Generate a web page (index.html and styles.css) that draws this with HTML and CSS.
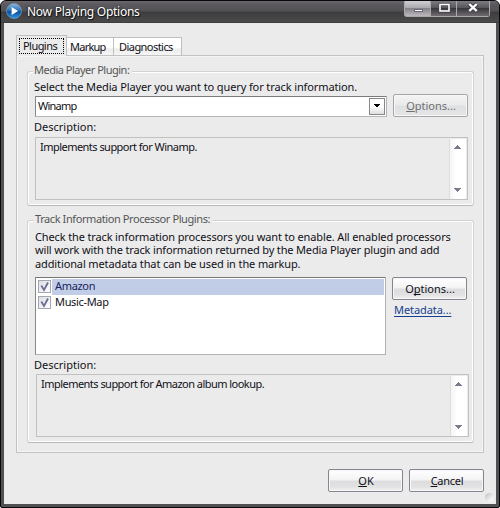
FILE: index.html
```html
<!DOCTYPE html>
<html lang="en">
<head>
<meta charset="utf-8">
<title>Now Playing Options</title>
<link rel="stylesheet" href="styles.css">
</head>
<body>
<div class="window">
  <header class="titlebar">
    <svg class="app-icon" width="16" height="16" viewBox="0 0 17 17">
      <defs><linearGradient id="orb" x1="0" y1="0" x2="0" y2="1"><stop offset="0" stop-color="#8fb8dc"/><stop offset=".45" stop-color="#2f75b8"/><stop offset=".55" stop-color="#0a4f9e"/><stop offset="1" stop-color="#2c9be4"/></linearGradient></defs>
      <circle cx="8.5" cy="8.5" r="8" fill="url(#orb)" stroke="#7f9dbd" stroke-width=".7"/>
      <path d="M6 4.3L12.8 8.5L6 12.7Z" fill="#fff"/>
    </svg>
    <h1 class="title"><span class="t-title">Now Playing Options</span></h1>
    <div class="controls">
      <span class="ctl ctl-min"><svg width="25" height="14"><rect x="9.5" y="8.5" width="8" height="2" fill="#fff" stroke="#666678"/></svg></span>
      <span class="ctl ctl-max"><svg width="25" height="14"><rect x="9" y="3.5" width="9" height="7" fill="none" stroke="#44444c" stroke-width="3"/><rect x="9" y="3.5" width="9" height="6.5" fill="none" stroke="#fff" stroke-width="1.6"/></svg></span>
      <span class="ctl ctl-close"><svg width="32" height="14"><path d="M12 3L20 10M20 3L12 10" stroke="#44444c" stroke-width="4.4"/><path d="M12.3 3L19.7 10M19.7 3L12.3 10" stroke="#fff" stroke-width="2.4"/></svg></span>
    </div>
  </header>
  <main class="client">
    <nav class="tabs">
      <div class="tab tab-active"><span class="focus"><span class="t-plugins">Plugins</span></span></div>
      <div class="tab tab-markup"><span class="t-markup">Markup</span></div>
      <div class="tab tab-diag"><span class="t-diag">Diagnostics</span></div>
    </nav>
    <div class="panel">
      <section class="group group-player">
        <h2 class="legend"><span class="t-leg1">Media Player Plugin:</span></h2>
        <p class="line"><span class="t-select">Select the Media Player you want to query for track information.</span></p>
        <div class="row">
          <div class="combo"><span class="t-winamp">Winamp</span>
            <span class="drop"><svg width="14" height="15"><path d="M4 5H10V6H9V7H8V8H6V7H5V6H4Z" fill="#000"/></svg></span>
          </div>
          <div class="button disabled"><span class="t-opt"><u>O</u>ptions...</span></div>
        </div>
        <p class="line desc-label"><span class="t-desc">Description:</span></p>
        <div class="memo"><span class="t-imp1">Implements support for Winamp.</span>
          <div class="scroll"><svg width="16" height="60"><path d="M7 6H8V7H9V8H10V9H11V10H4V9H5V8H6V7H7ZM4 49H11V50H10V51H9V52H8V53H7V52H6V51H5V50H4Z" fill="#797c8c"/></svg></div>
        </div>
      </section>
      <section class="group group-track">
        <h2 class="legend legend-track"><span class="t-leg2">Track Information Processor Plugins:</span></h2>
        <p class="para"><span class="t-p1">Check the track information processors you want to enable. All enabled processors</span><span class="t-p2">will work with the track information returned by the Media Player plugin and add</span><span class="t-p3">additional metadata that can be used in the markup.</span></p>
        <div class="row row-list">
          <div class="list">
            <div class="item"><span class="check"><svg width="11" height="11"><path d="M2.3 4.5L5 9L9 1.5" fill="none" stroke="#696c99" stroke-width="1.8"/></svg></span><div class="name selected"><span class="t-amazon">Amazon</span></div></div>
            <div class="item"><span class="check"><svg width="11" height="11"><path d="M2.3 4.5L5 9L9 1.5" fill="none" stroke="#696c99" stroke-width="1.8"/></svg></span><div class="name"><span class="t-music">Music-Map</span></div></div>
          </div>
          <div class="side">
            <div class="button"><span class="t-opt">O<u>p</u>tions...</span></div>
            <a class="link"><span class="t-meta">Metadata...</span></a>
          </div>
        </div>
        <p class="line desc-label2"><span class="t-desc">Description:</span></p>
        <div class="memo memo-track"><span class="t-imp2">Implements support for Amazon album lookup.</span>
          <div class="scroll"><svg width="16" height="60"><path d="M7 6H8V7H9V8H10V9H11V10H4V9H5V8H6V7H7ZM4 49H11V50H10V51H9V52H8V53H7V52H6V51H5V50H4Z" fill="#797c8c"/></svg></div>
        </div>
      </section>
    </div>
    <footer class="actions">
      <div class="button"><span class="t-ok"><u>O</u>K</span></div>
      <div class="button"><span class="t-cancel"><u>C</u>ancel</span></div>
    </footer>
    <span class="grip"></span>
  </main>
</div>
</body>
</html>
```

FILE: styles.css
```css
* { box-sizing: border-box; }
body { margin: 0; width: 500px; height: 508px; overflow: hidden; background: #fff; font: 11px/14px "Noto Sans", "Open Sans", sans-serif; color: #101018; }
h1, h2, p { margin: 0; font: inherit; }
svg { display: block; }
span { white-space: nowrap; }
u { text-decoration: underline; text-underline-offset: 1px; text-decoration-thickness: 1px; text-decoration-skip-ink: none; }

.window { width: 500px; height: 508px; border: 1px solid #08080a; border-radius: 6px 6px 2px 2px; background: #505052; padding: 0 3px 3px; overflow: hidden; }
.titlebar { height: 22px; margin: 0 -3px; padding: 1px 9px 0 5px; display: flex; background: linear-gradient(#6c686e 0, #5c5a5e 3px, #525154 10px, #3d3d3f 11px, #4a4a4b 21px, #333 22px); }
.app-icon { margin-top: 1px; flex: none; }
.title { margin: 1px auto 0 5px; font-size: 12px; line-height: 17px; color: #fff; text-shadow: 1px 1px 1px #111, -1px 0 1px #222; }
.controls { display: flex; height: 16px; margin-top: -1px; border: 1px solid #a9a9ae; border-top: 0; border-radius: 0 0 3px 3px; width: 86px; }
.ctl { height: 15px; border-right: 1px solid #a9a9ae; background: linear-gradient(#7c7c80, #58585c 45%, #38383b 50%, #706b70); }
.ctl-min { width: 26px; background: linear-gradient(#d0d0d4, #aaa9ae 45%, #858489 50%, #bcb8bd); }
.ctl-max { width: 26px; }
.ctl-close { width: 32px; border-right: 0; }

.client { height: 481px; background: #ebebeb; padding: 12px 12px 0; position: relative; }
.tabs { height: 20px; display: flex; align-items: flex-end; }
.tab { height: 18px; border: 1px solid #bfbfbf; border-left: 0; border-bottom: 0; background: linear-gradient(#fff 0, #fff 55%, #ececec 65%, #f6f6f6); padding-top: 2px; }
.tab-active { width: 51px; height: 21px; margin-bottom: -1px; border-left: 1px solid #bfbfbf; background: #ebebeb; padding: 2px 2px 0; position: relative; }
.focus { display: block; width: 45px; height: 16px; border: 1px dotted #000; padding: 0 0 0 3px; line-height: 13px; }
.tab-markup { width: 47px; padding-left: 3px; }
.tab-diag { width: 68px; padding-left: 5px; }
.panel { width: 468px; height: 398px; border: 1px solid #c3c3c3; box-shadow: inset 1px 1px #f5f5f5, inset -1px -1px #f5f5f5; padding: 15px 10px 0; }
.group { width: 447px; border: 1px solid #d2d2d2; border-radius: 3px; box-shadow: inset 1px 1px #fff, inset -1px -1px #fff; padding: 0 5px 0 7px; }
.group-player { height: 135px; border-bottom-color: #b9b9b9; }
.group-track { height: 223px; margin-top: 14px; border-bottom-color: #b9b9b9; }
.legend { width: max-content; height: 14px; margin: -9px 0 0 -2px; padding: 0 3px 0 1px; background: #ebebeb; color: #555; }
.legend-track { margin-left: -1px; }
.line { height: 14px; }
.group-player > .line:nth-of-type(1) { margin-top: 3px; text-indent: -1px; }
.row { display: flex; }
.combo { width: 352px; height: 21px; margin-top: 2px; border: 1px solid; border-color: #7c7c80 #b4b4b8 #b4b4b8 #85858a; border-radius: 1px; background: #fff; display: flex; justify-content: space-between; padding: 2px 1px 1px 2px; }
.drop { width: 16px; height: 17px; margin-top: -1px; border: 1px solid #888; background: linear-gradient(#fff 50%, #dedede); }
.button { width: 75px; height: 23px; border: 1px solid #858691; border-radius: 2px; box-shadow: inset 0 0 0 1px #f7f7f7; background: linear-gradient(#fff 0, #f4f4f5 45%, #dddde0 55%, #e2e2e2 80%, #f2f2f2); text-align: center; padding: 4px 0 0 1px; line-height: 14px; }
.row .button { margin-left: 6px; }
.disabled { color: #707070; border-color: #a5a6ac; background: linear-gradient(#f4f4f4, #ebebed 45%, #dfe0e2 55%, #e5e5e5); }
.desc-label { margin-top: 3px; text-indent: -1px; }
.memo { width: 433px; height: 63px; margin-top: 3px; border: 1px solid #c1c1c1; padding: 2px 1px 1px 4px; display: flex; justify-content: space-between; }
.scroll { width: 17px; height: 60px; margin-top: -1px; border-left: 1px solid #ddd; background: linear-gradient(90deg, #f5f5f5, #fff 40%); }
.para { margin-top: 4px; height: 40px; }
.para span { display: block; width: max-content; height: 13px; line-height: 13px; }
.para .t-p3 { margin-top: 1px; }
.row-list { margin-top: 7px; }
.list { width: 351px; height: 78px; border: 1px solid #b2b2b5; border-top-color: #777; border-left-color: #888; background: #fff; padding: 1px; }
.item { height: 16px; display: flex; }
.check { width: 13px; height: 13px; margin: 1px 1px 0 1px; border: 1px solid #a5a6b4; background: linear-gradient(135deg, #dedede, #fff); flex: none; }
.name { flex: 1; padding: 0 0 0 3px; height: 16px; }
.selected { background: #c1cde6; color: #18225f; }
.side { width: 82px; }
.link { display: block; margin: 3px 0 0 8px; color: #153f91; text-decoration: underline; text-underline-offset: 2px; text-decoration-skip-ink: none; }
.desc-label2 { margin-top: 3px; text-indent: -1px; }
.memo-track { margin: 2px 0 0 1px; }
.actions { display: flex; justify-content: flex-end; gap: 6px; margin-top: 16px; }
.grip { position: absolute; right: 2px; bottom: 2px; width: 9px; height: 9px; border-radius: 50%; background: linear-gradient(135deg, #bcbcbc, #f5f5f5 70%); }

.t-title { letter-spacing: -.26px; }
.t-plugins, .t-diag { letter-spacing: -.55px; }
.t-markup { letter-spacing: -.75px; }
.t-leg1 { letter-spacing: -.5px; }
.t-leg2 { letter-spacing: -.41px; }
.t-select { letter-spacing: -.11px; }
.t-winamp { letter-spacing: -.75px; }
.t-imp1, .t-imp2 { letter-spacing: -.53px; }
.t-p1 { letter-spacing: -.135px; }
.t-p2 { letter-spacing: -.16px; }
.t-p3 { letter-spacing: -.12px; }
.t-amazon, .t-music { letter-spacing: -.33px; }
.t-cancel { letter-spacing: -.25px; }
.t-meta { letter-spacing: -.08px; }
```
